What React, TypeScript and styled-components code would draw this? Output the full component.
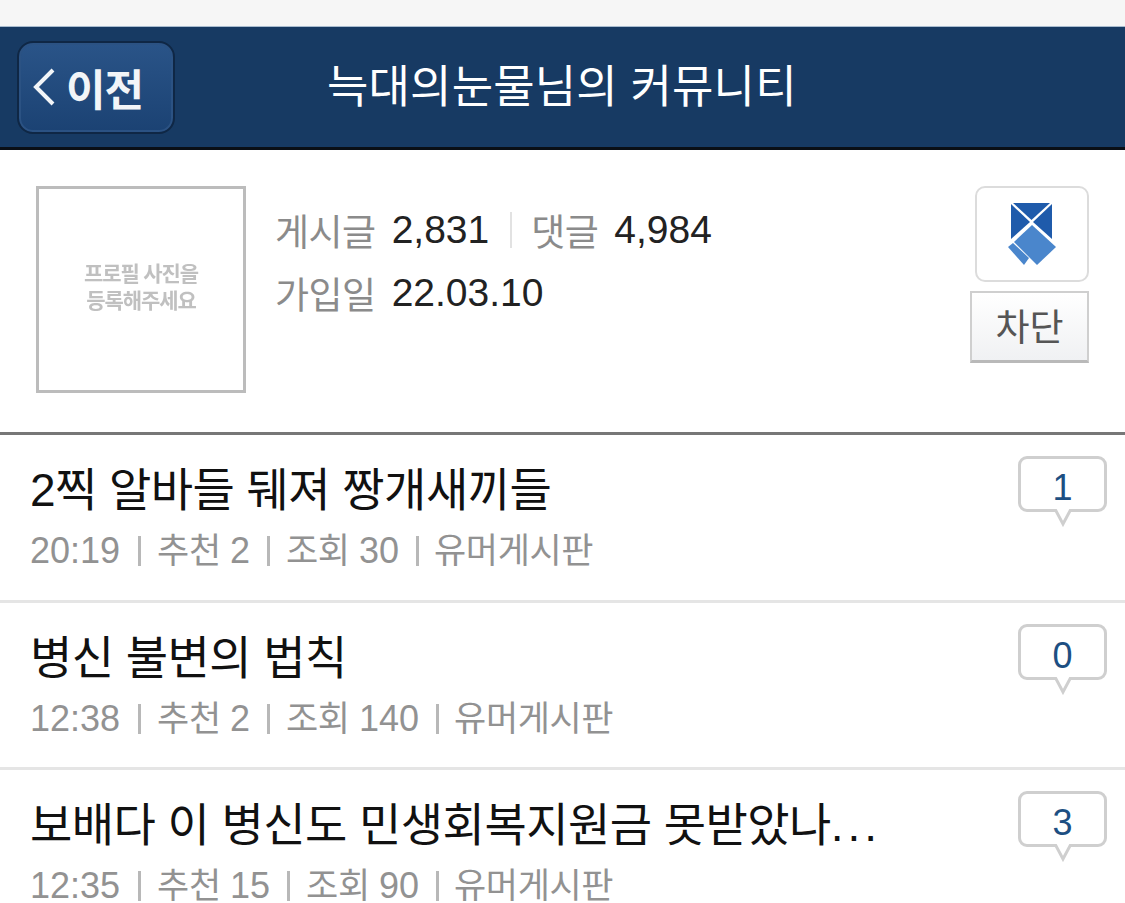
import React from "react";
import styled, { createGlobalStyle } from "styled-components";

const GlobalStyle = createGlobalStyle`
    html, body {
        margin:0;
        padding:0;
        height:903px;
        overflow:hidden;
        background:#fff;
        font-family:"Liberation Sans","Noto Sans CJK KR",sans-serif;
    }
`
const Page = styled.div`
    width:1125px;
    height:903px;
    overflow:hidden;
`
const StatusBar = styled.div`
    height:26px;
    background:#f6f6f6;
    border-bottom:1px solid #a9bccf;
`
const Header = styled.div`
    height:120px;
    background:#173a63;
    border-bottom:3px solid #0a0f16;
    display:flex;
    align-items:center;
    padding:0 0 0 17px;
    .title{
        margin-left:152px;
        padding-top:2px;
        font-size:45px;
        line-height:52px;
        color:#fff;
        letter-spacing:0.15px;
        white-space:nowrap;
    }
`
const BackButton = styled.div`
    box-sizing:border-box;
    width:158px;
    height:93px;
    border-radius:16px;
    border:2px solid #0f2745;
    box-shadow:inset 0 0 0 2px #2b5283;
    background:linear-gradient(180deg,#2a5488 0%,#1b4273 100%);
    display:flex;
    align-items:center;
    padding-left:13px;
    gap:10px;
    color:#f2f5f8;
    font-size:43px;
    font-weight:700;
    letter-spacing:-1px;
    svg{
        display:block;
    }
`
const Profile = styled.div`
    height:285px;
    box-sizing:border-box;
    border-bottom:3px solid #777;
    display:flex;
    padding:36px 36px 0 36px;
`
const Photo = styled.div`
    box-sizing:border-box;
    width:210px;
    height:207px;
    border:3px solid #bcbcbc;
    display:flex;
    flex-direction:column;
    align-items:center;
    justify-content:center;
    padding-bottom:5px;
`
const PhotoText = styled.div`
    font-size:21px;
    line-height:27px;
    font-weight:700;
    letter-spacing:-1.1px;
    color:#c0c0c0;
    text-align:center;
    filter:blur(0.6px);
`
const Stats = styled.div`
    margin-left:29px;
    padding-top:12px;
    flex:1;
`
const StatRow = styled.div`
    height:63px;
    display:flex;
    align-items:center;
    font-size:39px;
    color:#222;
    .label{
        color:#8b8b8b;
        font-size:37px;
        margin-right:16px;
        letter-spacing:-0.5px;
    }
    .divider{
        width:2px;
        height:36px;
        background:#e2e2e2;
        margin:0 19px 0 21px;
    }
`
const Side = styled.div`
    width:119px;
    display:flex;
    flex-direction:column;
    align-items:flex-end;
    gap:9px;
`
const BadgeBox = styled.div`
    box-sizing:border-box;
    width:114px;
    height:96px;
    border:2px solid #dcdcdc;
    border-radius:10px;
    display:flex;
    align-items:center;
    justify-content:center;
`
const BlockButton = styled.div`
    box-sizing:border-box;
    width:119px;
    height:72px;
    padding-bottom:4px;
    border:2px solid #cfcfcf;
    border-bottom:3px solid #b9b9b9;
    background:linear-gradient(180deg,#fff 0%,#f0f1f3 100%);
    display:flex;
    align-items:center;
    justify-content:center;
    font-size:37px;
    color:#555;
`
const Row = styled.div`
    height:167.5px;
    box-sizing:border-box;
    border-bottom:3px solid #e5e5e5;
    padding:0 18px 0 30px;
    display:flex;
    justify-content:space-between;
    &:last-child{
        border-bottom:none;
    }
`
const RowText = styled.div`
    padding-top:25px;
`
const RowTitle = styled.div`
    font-size:46px;
    line-height:60px;
    color:#111;
    white-space:nowrap;
    letter-spacing:-0.55px;
`
const Dots = styled.span`
    letter-spacing:4px;
`
const Meta = styled.div`
    margin-top:8px;
    display:flex;
    align-items:center;
    font-size:35px;
    line-height:46px;
    color:#929292;
    letter-spacing:-0.4px;
    white-space:nowrap;
    .num{
        font-size:36px;
        letter-spacing:0;
    }
    .sep{
        width:3px;
        height:30px;
        background:#b8b8b8;
        margin:0 16px 0 18px;
    }
    .sep.mid{
        margin-left:17px;
    }
    .sep.last{
        margin:0 15px 0 17px;
    }
`
const Bubble = styled.div`
    box-sizing:border-box;
    width:89px;
    height:56px;
    margin-top:21px;
    margin-left:-1px;
    padding-top:8px;
    border:3px solid #cfcfcf;
    border-radius:9px;
    background:#fff;
    position:relative;
    display:flex;
    align-items:center;
    justify-content:center;
    font-size:36px;
    color:#1d4f82;
`
const BubbleTail = styled.svg`
    position:absolute;
    left:33px;
    top:50px;
`

const posts = [
    { title: "2찍 알바들 뒈져 짱개새끼들", more: false, time: "20:19", up: 2, views: 30, board: "유머게시판", replies: 1 },
    { title: "병신 불변의 법칙", more: false, time: "12:38", up: 2, views: 140, board: "유머게시판", replies: 0 },
    { title: "보배다 이 병신도 민생회복지원금 못받았나", more: true, time: "12:35", up: 15, views: 90, board: "유머게시판", replies: 3 },
]

const App: React.FC = () => {
    return (
        <Page>
            <GlobalStyle />
            <StatusBar />
            <Header>
                <BackButton>
                    <svg width="24" height="40" viewBox="0 0 24 40" fill="none">
                        <path d="M21 3 L4 20 L21 37" stroke="#f2f5f8" strokeWidth="4" />
                    </svg>
                    <span>이전</span>
                </BackButton>
                <div className="title">늑대의눈물님의 커뮤니티</div>
            </Header>
            <Profile>
                <Photo>
                    <PhotoText>프로필 사진을<br />등록해주세요</PhotoText>
                </Photo>
                <Stats>
                    <StatRow>
                        <span className="label">게시글</span>2,831
                        <span className="divider" />
                        <span className="label">댓글</span>4,984
                    </StatRow>
                    <StatRow>
                        <span className="label">가입일</span>22.03.10
                    </StatRow>
                </Stats>
                <Side>
                    <BadgeBox>
                        <svg width="48" height="62" viewBox="0 0 48 62">
                            <path d="M5 0 H42 L23.5 17 Z" fill="#1f5bab" />
                            <path d="M3 1 L22 19 L3 36 Z" fill="#1f5bab" />
                            <path d="M44 1 L25 19 L44 36 Z" fill="#1f5bab" />
                            <path d="M24 22 L48 44 L29 62 L6 39 Z" fill="#4a86cc" />
                            <path d="M0 44 L5 40 L21 55 L16 62 Z" fill="#4a86cc" />
                        </svg>
                    </BadgeBox>
                    <BlockButton>차단</BlockButton>
                </Side>
            </Profile>
            {posts.map((p) => (
                <Row key={p.time}>
                    <RowText>
                        <RowTitle>{p.title}{p.more && <Dots>...</Dots>}</RowTitle>
                        <Meta>
                            <span className="num">{p.time}</span>
                            <span className="sep" />
                            <span>추천&nbsp;<span className="num">{p.up}</span></span>
                            <span className="sep mid" />
                            <span>조회&nbsp;<span className="num">{p.views}</span></span>
                            <span className="sep last" />
                            {p.board}
                        </Meta>
                    </RowText>
                    <Bubble>
                        {p.replies}
                        <BubbleTail width="18" height="18" viewBox="0 0 18 18">
                            <path d="M1 0 L9 15 L17 0" fill="#fff" stroke="#cfcfcf" strokeWidth="3" />
                        </BubbleTail>
                    </Bubble>
                </Row>
            ))}
        </Page>
    )
}

export default App
